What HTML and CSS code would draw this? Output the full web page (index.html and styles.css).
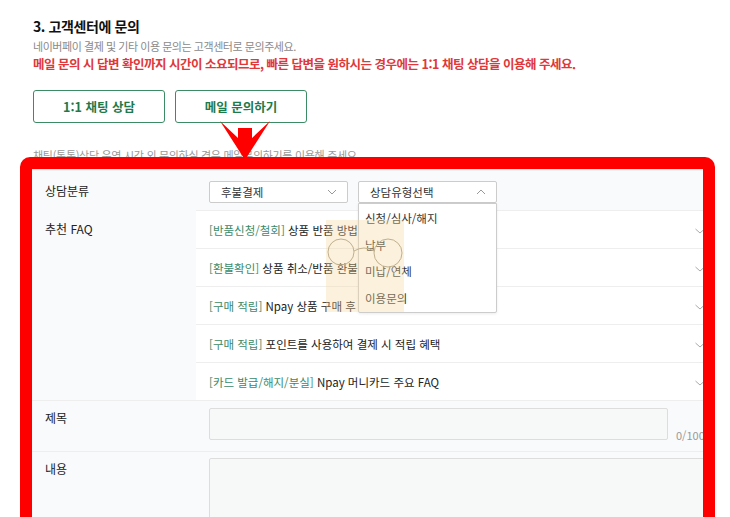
FILE: index.html
```html
<!DOCTYPE html>
<html lang="ko">
<head>
<meta charset="utf-8">
<title>고객센터에 문의</title>
<link rel="stylesheet" href="styles.css">
</head>
<body>
<div class="page">
  <div class="intro">
    <h3 class="title">3. 고객센터에 문의</h3>
    <p class="desc">네이버페이 결제 및 기타 이용 문의는 고객센터로 문의주세요.</p>
    <p class="warn">메일 문의 시 답변 확인까지 시간이 소요되므로, 빠른 답변을 원하시는 경우에는 1:1 채팅 상담을 이용해 주세요.</p>
    <div class="btns">
      <button class="btn">1:1 채팅 상담</button>
      <button class="btn">메일 문의하기</button>
    </div>
    <p class="notice">채팅(톡톡)상담 운영 시간 외 문의하실 경우 메일문의하기를 이용해 주세요.</p>
  </div>

  <div class="redbox">
    <div class="panel">
      <div class="row row-cat">
        <div class="label">상담분류</div>
        <div class="field selects">
          <div class="select s1">
            <span>후불결제</span>
            <svg class="chev" width="10" height="6" viewBox="0 0 10 6"><path d="M1 1 L5 5 L9 1" fill="none" stroke="#999" stroke-width="1"/></svg>
          </div>
          <div class="select s2">
            <span>상담유형선택</span>
            <svg class="chev" width="10" height="6" viewBox="0 0 10 6"><path d="M1 5 L5 1 L9 5" fill="none" stroke="#999" stroke-width="1"/></svg>
            <ul class="dropdown">
              <li>신청/심사/해지</li>
              <li>납부</li>
              <li>미납/연체</li>
              <li>이용문의</li>
            </ul>
          </div>
        </div>
      </div>
      <div class="row row-faq">
        <div class="label">추천 FAQ</div>
        <ul class="faq">
          <li><span><em>[반품신청/철회]</em> 상품 반품 방법</span><svg class="fchev" width="8" height="6" viewBox="0 0 8 6"><path d="M0.5 1 L5 5 L9.5 1" fill="none" stroke="#aaa" stroke-width="1"/></svg></li>
          <li><span><em>[환불확인]</em> 상품 취소/반품 환불</span><svg class="fchev" width="8" height="6" viewBox="0 0 8 6"><path d="M0.5 1 L5 5 L9.5 1" fill="none" stroke="#aaa" stroke-width="1"/></svg></li>
          <li><span><em>[구매 적립]</em> Npay 상품 구매 후 적립</span><svg class="fchev" width="8" height="6" viewBox="0 0 8 6"><path d="M0.5 1 L5 5 L9.5 1" fill="none" stroke="#aaa" stroke-width="1"/></svg></li>
          <li><span><em>[구매 적립]</em> 포인트를 사용하여 결제 시 적립 혜택</span><svg class="fchev" width="8" height="6" viewBox="0 0 8 6"><path d="M0.5 1 L5 5 L9.5 1" fill="none" stroke="#aaa" stroke-width="1"/></svg></li>
          <li><span><em>[카드 발급/해지/분실]</em> Npay 머니카드 주요 FAQ</span><svg class="fchev" width="8" height="6" viewBox="0 0 8 6"><path d="M0.5 1 L5 5 L9.5 1" fill="none" stroke="#aaa" stroke-width="1"/></svg></li>
        </ul>
      </div>
      <div class="row row-title">
        <div class="label">제목</div>
        <div class="field">
          <div class="input"></div>
          <span class="count">0/100</span>
        </div>
      </div>
      <div class="row row-body">
        <div class="label">내용</div>
        <div class="field">
          <div class="textarea"></div>
        </div>
      </div>
    </div>
  </div>

  <svg class="arrow" width="56" height="44" viewBox="0 0 56 44">
    <polygon points="21,10 35,10 35,20 53,3 28,42 3,3 21,20" fill="#ff0000"/>
  </svg>

  <svg class="watermark" width="78" height="92" viewBox="0 0 78 92">
    <rect x="0" y="0" width="78" height="92" fill="#f5d89a" opacity="0.35"/>
    <circle cx="15" cy="32" r="13" fill="none" stroke="#bfb08e" stroke-width="1"/>
    <circle cx="62" cy="33" r="14" fill="none" stroke="#bfb08e" stroke-width="1"/>
    <path d="M28 31 Q38 25 48 31" fill="none" stroke="#bfb08e" stroke-width="1"/>
  </svg>
</div>
</body>
</html>
```

FILE: styles.css
```css
* { box-sizing: border-box; }
html, body {
  margin: 0;
  padding: 0;
  background: #fff;
  font-family: "Noto Sans CJK KR", "Noto Sans", sans-serif;
  color: #222;
  overflow: hidden;
}
.page {
  position: relative;
  width: 730px;
  height: 517px;
  padding: 0 15px 0 20px;
  overflow: hidden;
}
.intro {
  padding: 17px 0 0 13px;
}
.title {
  margin: 0;
  font-size: 14px;
  line-height: 18px;
  font-weight: 700;
  color: #111;
  letter-spacing: -0.4px;
}
.desc {
  margin: 3px 0 0;
  font-size: 11px;
  line-height: 16px;
  color: #8a8a8a;
  letter-spacing: -0.45px;
}
.warn {
  margin: 1px 0 0;
  font-size: 12.5px;
  line-height: 18px;
  font-weight: 700;
  color: #e0383a;
  letter-spacing: -0.5px;
}
.btns {
  display: flex;
  gap: 10px;
  margin-top: 17px;
}
.btn {
  width: 132px;
  height: 33px;
  background: #fff;
  border: 1px solid #3d8b65;
  border-radius: 3px;
  color: #1f7a4b;
  font-family: inherit;
  font-size: 12.5px;
  font-weight: 700;
  padding: 0;
}
.notice {
  margin: 24px 0 0;
  font-size: 11px;
  line-height: 16px;
  color: #999;
  letter-spacing: -0.3px;
}
.redbox {
  position: relative;
  z-index: 1;
  margin-top: -6px;
  border: 12px solid #ff0000;
  border-radius: 10px;
  height: 380px;
  background: #fff;
  overflow: hidden;
}
.panel {
  background: #f9fafb;
  height: 100%;
  border-top: 1px solid #f3e4dc;
}
.row {
  display: flex;
}
.label {
  width: 164px;
  flex: none;
  padding-left: 13px;
  font-size: 12px;
  color: #222;
}
.row-cat {
  height: 40px;
}
.row-cat .label {
  padding-top: 12px;
  line-height: 18px;
}
.field {
  padding-left: 13px;
  display: flex;
  align-items: flex-start;
  gap: 8px;
  flex: 1;
}
.selects {
  padding-top: 11px;
  gap: 10px;
}
.select {
  position: relative;
  width: 139px;
  height: 22px;
  border: 1px solid #ccc;
  border-radius: 2px;
  background: #fff;
  display: flex;
  align-items: center;
  justify-content: space-between;
  padding: 0 10px 0 11px;
  font-size: 11.5px;
  color: #333;
}
.s2 {
  z-index: 3;
}
.dropdown {
  position: absolute;
  top: 21px;
  left: -1px;
  width: 139px;
  height: 110px;
  margin: 0;
  padding: 1px 0 0;
  list-style: none;
  background: #fff;
  border: 1px solid #ccc;
  border-radius: 0 0 2px 2px;
  box-shadow: 0 1px 3px rgba(0,0,0,0.08);
}
.dropdown li {
  height: 26.5px;
  line-height: 26px;
  padding-left: 6px;
  font-size: 11.5px;
  color: #333;
}
.row-faq .label {
  padding-top: 10px;
  line-height: 18px;
}
.faq {
  flex: 1;
  margin: 0;
  padding: 0;
  list-style: none;
  background: #fff;
}
.faq li {
  height: 38px;
  border-top: 1px solid #eeeeee;
  display: flex;
  align-items: center;
  justify-content: space-between;
  padding: 1px 0 0 13px;
  font-size: 11.5px;
  color: #222;
}
.faq em {
  font-style: normal;
  color: #3b8a68;
}
.fchev {
  margin-top: 2px;
}
.row-title {
  height: 51px;
  border-top: 1px solid #eeeeee;
}
.row-title .label {
  padding-top: 8px;
  line-height: 18px;
}
.row-title .field {
  padding-top: 7px;
}
.input {
  width: 459px;
  height: 32px;
  border: 1px solid #ddd;
  border-radius: 2px;
  background: #f7f8f8;
  flex: none;
}
.count {
  margin-top: 20px;
  font-size: 11px;
  color: #999;
  line-height: 14px;
  white-space: nowrap;
}
.row-body {
  border-top: 1px solid #eeeeee;
  flex: 1;
}
.row-body .label {
  padding-top: 8px;
  line-height: 18px;
}
.row-body .field {
  padding-top: 6px;
}
.textarea {
  width: 520px;
  height: 80px;
  border: 1px solid #ddd;
  border-radius: 2px;
  background: #f7f8f8;
  flex: none;
}
.arrow {
  position: absolute;
  left: 217px;
  top: 118px;
  z-index: 2;
}
.watermark {
  position: absolute;
  left: 326px;
  top: 220px;
  z-index: 4;
  pointer-events: none;
}
```
